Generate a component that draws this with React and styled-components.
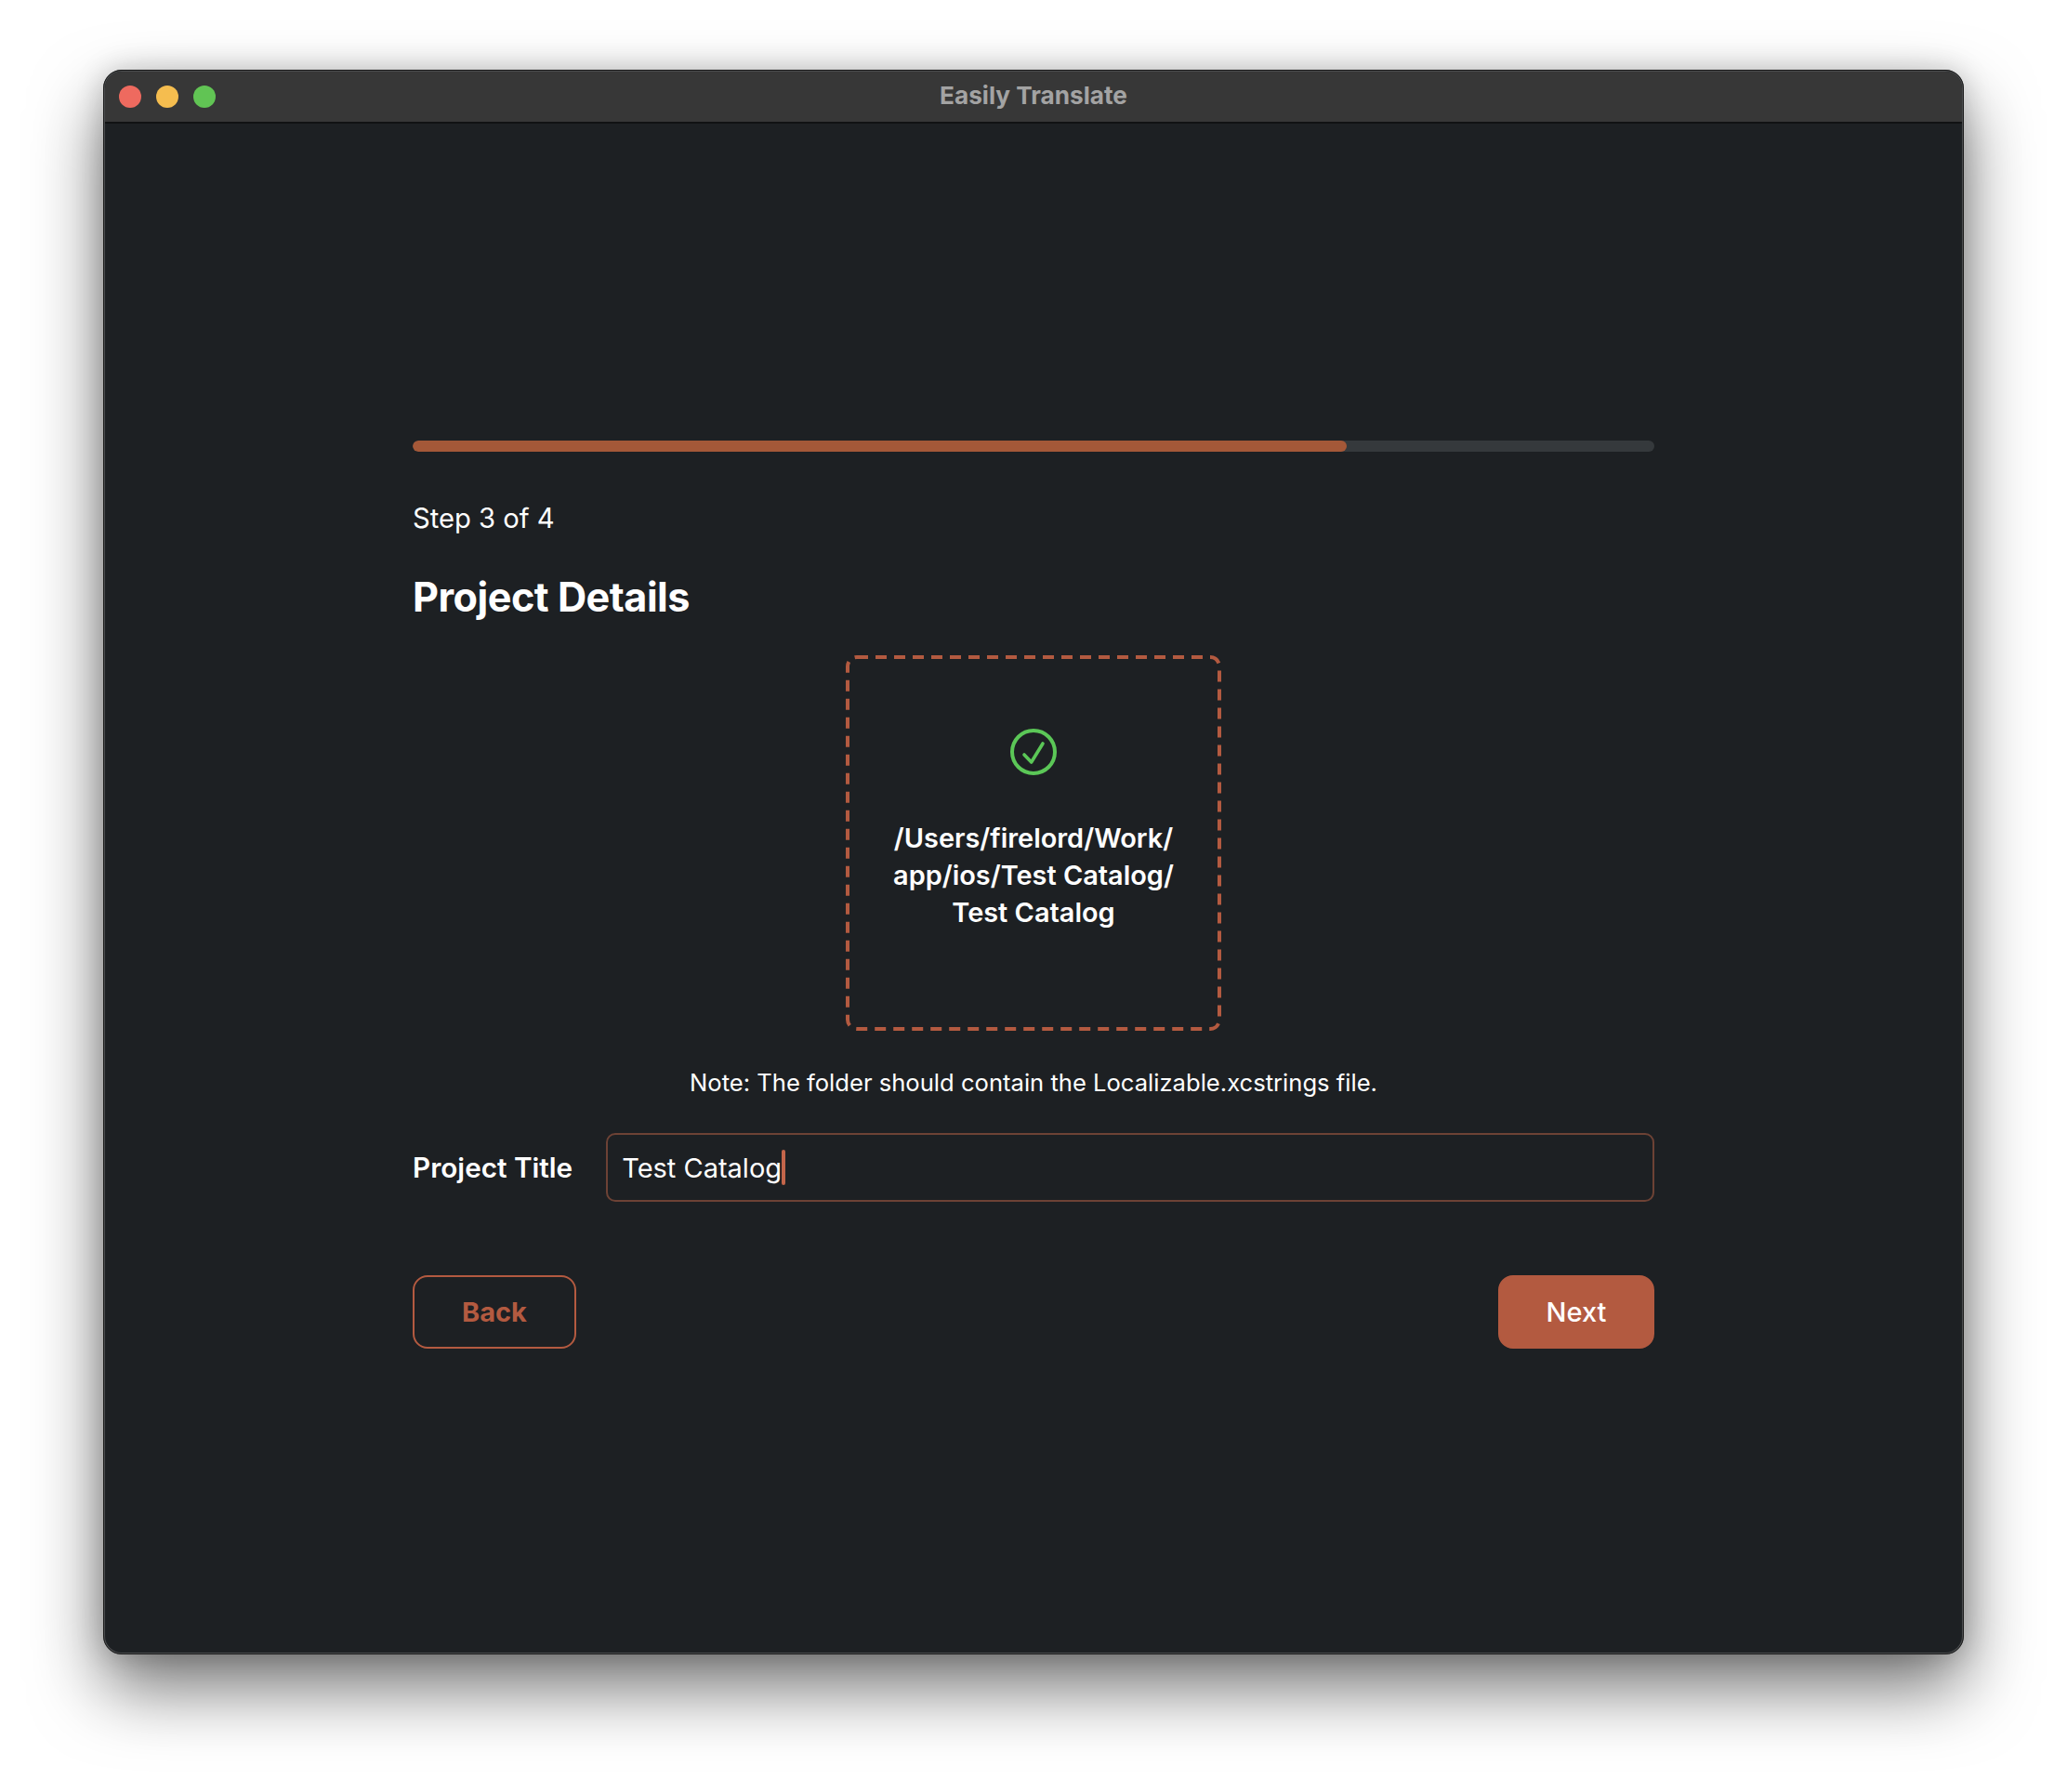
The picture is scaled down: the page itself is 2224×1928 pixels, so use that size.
import React from 'react';
import styled, { createGlobalStyle } from 'styled-components';

const ACCENT = '#b35a40';
const FONT = 'Inter, "Noto Sans", sans-serif';

const GlobalStyle = createGlobalStyle`
  html, body {
    margin: 0;
    padding: 0;
    background: #ffffff;
  }
  * {
    box-sizing: border-box;
  }
`;

const StPage = styled.div`
  width: 2224px;
  height: 1928px;
  padding: 75px 111px 0;
  font-family: ${FONT};
  color: #ffffff;
  overflow: hidden;
`;

const StWindow = styled.div`
  width: 2002px;
  height: 1705px;
  display: flex;
  flex-direction: column;
  background: #1d2023;
  border-radius: 20px;
  border: 2px solid #4c4e50;
  outline: 1px solid #1a1a1a;
  outline-offset: -1px;
  box-shadow: 0 36px 76px rgba(0, 0, 0, 0.55), 0 0 30px rgba(0, 0, 0, 0.18);
  overflow: hidden;
`;

const StTitleBar = styled.header`
  height: 56px;
  flex-shrink: 0;
  position: relative;
  display: flex;
  align-items: center;
  justify-content: center;
  background: #373737;
  border-bottom: 2px solid #111213;
`;

const StLights = styled.div`
  position: absolute;
  left: 15px;
  top: 15px;
  display: flex;
  gap: 16px;
`;

const StLight = styled.span`
  width: 24px;
  height: 24px;
  border-radius: 50%;
  background: ${(p) => p.$color};
`;

const StWindowTitle = styled.h1`
  margin: -2px 0 0;
  font-size: 26.2px;
  line-height: 30px;
  font-weight: 700;
  color: #a3a3a3;
`;

const StBody = styled.main`
  flex: 1;
  padding: 341px 331px 0;
  display: flex;
  flex-direction: column;
`;

const StTrack = styled.div`
  height: 12px;
  border-radius: 6px;
  background: #35393c;
  overflow: hidden;
`;

const StFill = styled.div`
  height: 100%;
  border-radius: 6px;
  background: #a45838;
`;

const StStep = styled.p`
  margin: 54px 0 0;
  font-size: 29.2px;
  line-height: 36px;
  font-weight: 400;
`;

const StHeading = styled.h2`
  margin: 40px 0 0;
  font-size: 43.2px;
  line-height: 52px;
  font-weight: 700;
  letter-spacing: -0.5px;
`;

const StDropZone = styled.div`
  position: relative;
  align-self: center;
  width: 404px;
  height: 404px;
  margin-top: 37px;
  padding: 78px 40px 0;
  display: flex;
  flex-direction: column;
  align-items: center;
`;

const StDashes = styled.svg`
  position: absolute;
  inset: 0;
`;

const StPath = styled.p`
  margin: 47px 0 0;
  font-size: 28.9px;
  line-height: 40px;
  font-weight: 600;
  text-align: center;
  white-space: nowrap;
`;

const StNote = styled.p`
  margin: 40px 0 0;
  font-size: 25.6px;
  line-height: 32px;
  font-weight: 400;
  text-align: center;
`;

const StFieldRow = styled.div`
  margin-top: 38px;
  display: flex;
  align-items: center;
  gap: 36px;
`;

const StLabel = styled.label`
  font-size: 29.7px;
  line-height: 36px;
  font-weight: 600;
  white-space: nowrap;
`;

const StField = styled.div`
  flex: 1;
  height: 74px;
  padding: 0 15px;
  display: flex;
  align-items: center;
  border: 2px solid #6d4235;
  border-radius: 10px;
  font-size: 29px;
`;

const StCaret = styled.span`
  width: 4px;
  height: 38px;
  border-radius: 2px;
  background: #c4654a;
`;

const StActions = styled.div`
  margin-top: 79px;
  display: flex;
  justify-content: space-between;
`;

const StButton = styled.button`
  height: 79px;
  width: ${(p) => p.$width}px;
  border-radius: 16px;
  border: 2px solid ${ACCENT};
  background: ${(p) => (p.$primary ? ACCENT : 'transparent')};
  color: ${(p) => (p.$primary ? '#ffffff' : ACCENT)};
  font-family: ${FONT};
  font-size: 29px;
  font-weight: ${(p) => (p.$primary ? 500 : 700)};
`;

export default function App() {
  const progress = 75.2;

  return (
    <StPage>
      <GlobalStyle />
      <StWindow>
        <StTitleBar>
          <StLights>
            <StLight $color="#ee6a5f" />
            <StLight $color="#f5bd4f" />
            <StLight $color="#61c454" />
          </StLights>
          <StWindowTitle>Easily Translate</StWindowTitle>
        </StTitleBar>
        <StBody>
          <StTrack>
            <StFill style={{ width: `${progress}%` }} />
          </StTrack>
          <StStep>Step 3 of 4</StStep>
          <StHeading>Project Details</StHeading>
          <StDropZone>
            <StDashes width="404" height="404" viewBox="0 0 404 404" fill="none">
              <rect
                x="2"
                y="2"
                width="400"
                height="400"
                rx="10"
                stroke={ACCENT}
                strokeWidth="4"
                strokeDasharray="12 8"
              />
            </StDashes>
            <svg width="52" height="52" viewBox="0 0 52 52" fill="none" stroke="#5bc757" strokeLinecap="round" strokeLinejoin="round">
              <circle cx="26" cy="26" r="23" strokeWidth="4" />
              <path d="M16 29 L23.7 37 L36 17" strokeWidth="3.6" />
            </svg>
            <StPath>
              /Users/firelord/Work/
              <br />
              app/ios/Test Catalog/
              <br />
              Test Catalog
            </StPath>
          </StDropZone>
          <StNote>Note: The folder should contain the Localizable.xcstrings file.</StNote>
          <StFieldRow>
            <StLabel>Project Title</StLabel>
            <StField>
              Test Catalog
              <StCaret />
            </StField>
          </StFieldRow>
          <StActions>
            <StButton $width={176}>Back</StButton>
            <StButton $primary $width={168}>Next</StButton>
          </StActions>
        </StBody>
      </StWindow>
    </StPage>
  );
}
